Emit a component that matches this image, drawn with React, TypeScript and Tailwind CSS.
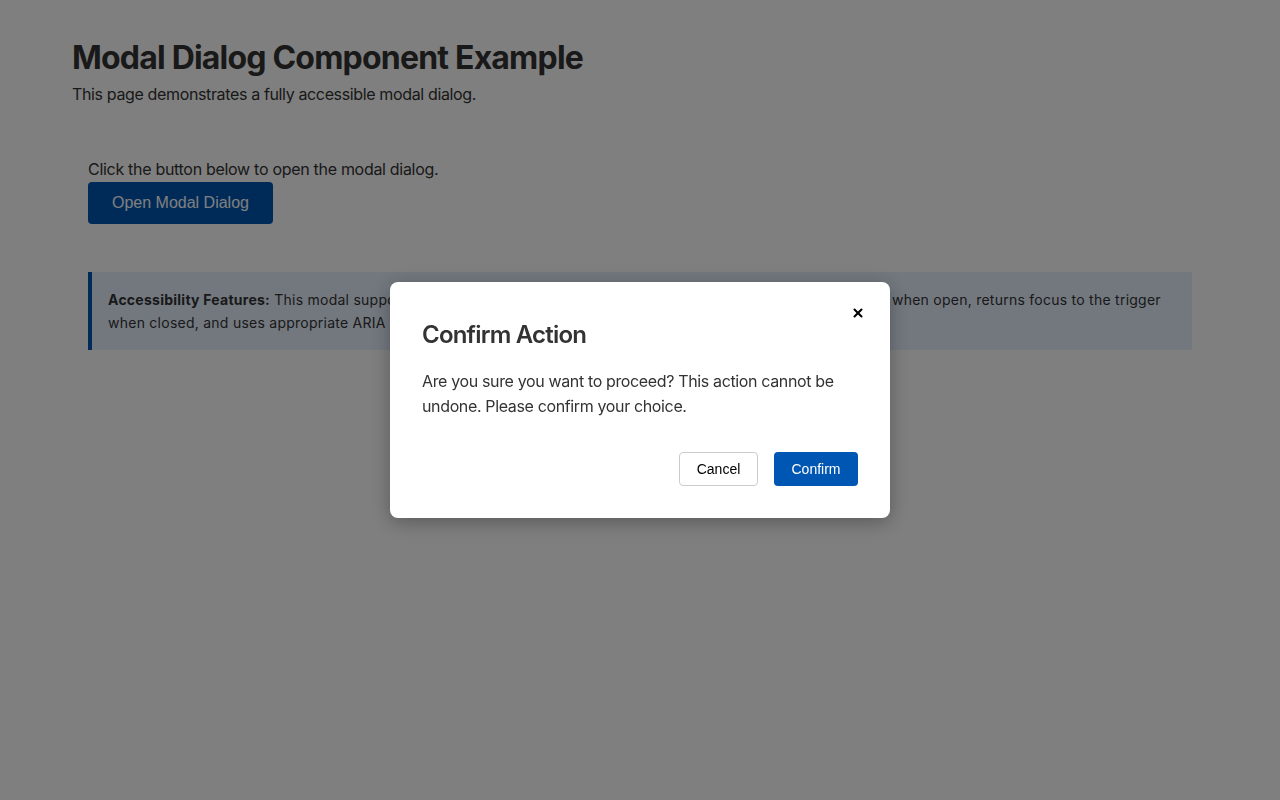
import { X } from "lucide-react";

export default function App() {
  return (
    <div className="relative min-h-screen bg-white font-['Inter',sans-serif] text-[#333]">
      <main className="px-[72px] pt-[39px]">
        <h1 className="text-[32px] font-bold leading-[38px] tracking-[-0.8px]">Modal Dialog Component Example</h1>
        <p className="mt-[5px] text-base leading-[1.6] tracking-[-0.36px]">This page demonstrates a fully accessible modal dialog.</p>

        <section className="mt-[49px] px-4">
          <p className="text-base leading-[1.6] tracking-[-0.3px]">Click the button below to open the modal dialog.</p>
          <button className="mt-0 h-[42px] rounded-[4px] bg-[#0056b3] px-6 font-['Liberation_Sans',Arial,sans-serif] text-base text-white">
            Open Modal Dialog
          </button>

          <div className="mt-12 border-l-4 border-[#0056b3] bg-[#e7f1ff] px-4 py-4 text-sm leading-[23px] tracking-[0.25px]">
            <strong className="font-bold">Accessibility Features:</strong> This modal supports keyboard navigation, closes on Escape, traps focus within the modal when open, returns focus to the trigger
            <br />
            when closed, and uses appropriate ARIA attributes for screen readers.
          </div>
        </section>
      </main>

      <div className="fixed inset-0 flex items-center justify-center bg-black/50">
        <div
          role="dialog"
          aria-modal="true"
          aria-labelledby="modal-title"
          className="relative w-[500px] rounded-lg bg-white px-8 pb-8 pt-[38px] shadow-[0_4px_20px_rgba(0,0,0,0.3)]"
        >
          <button aria-label="Close" className="absolute right-4 top-[15px] flex size-8 items-center justify-center text-black">
            <X className="size-[14px]" strokeWidth={3.5} />
          </button>
          <h2 id="modal-title" className="text-2xl font-semibold leading-[30px] tracking-[-0.8px] text-[#333]">Confirm Action</h2>
          <p className="mt-[19px] text-base leading-[25px] tracking-[-0.36px] text-[#333]">
            Are you sure you want to proceed? This action cannot be undone. Please confirm your choice.
          </p>
          <div className="mt-[33px] flex justify-end gap-4 font-['Liberation_Sans',Arial,sans-serif] text-sm">
            <button className="h-[34px] w-[79px] rounded-[4px] border border-[#ccc] bg-white text-black">Cancel</button>
            <button className="h-[34px] w-[84px] rounded-[4px] bg-[#0056b3] text-white">Confirm</button>
          </div>
        </div>
      </div>
    </div>
  );
}
